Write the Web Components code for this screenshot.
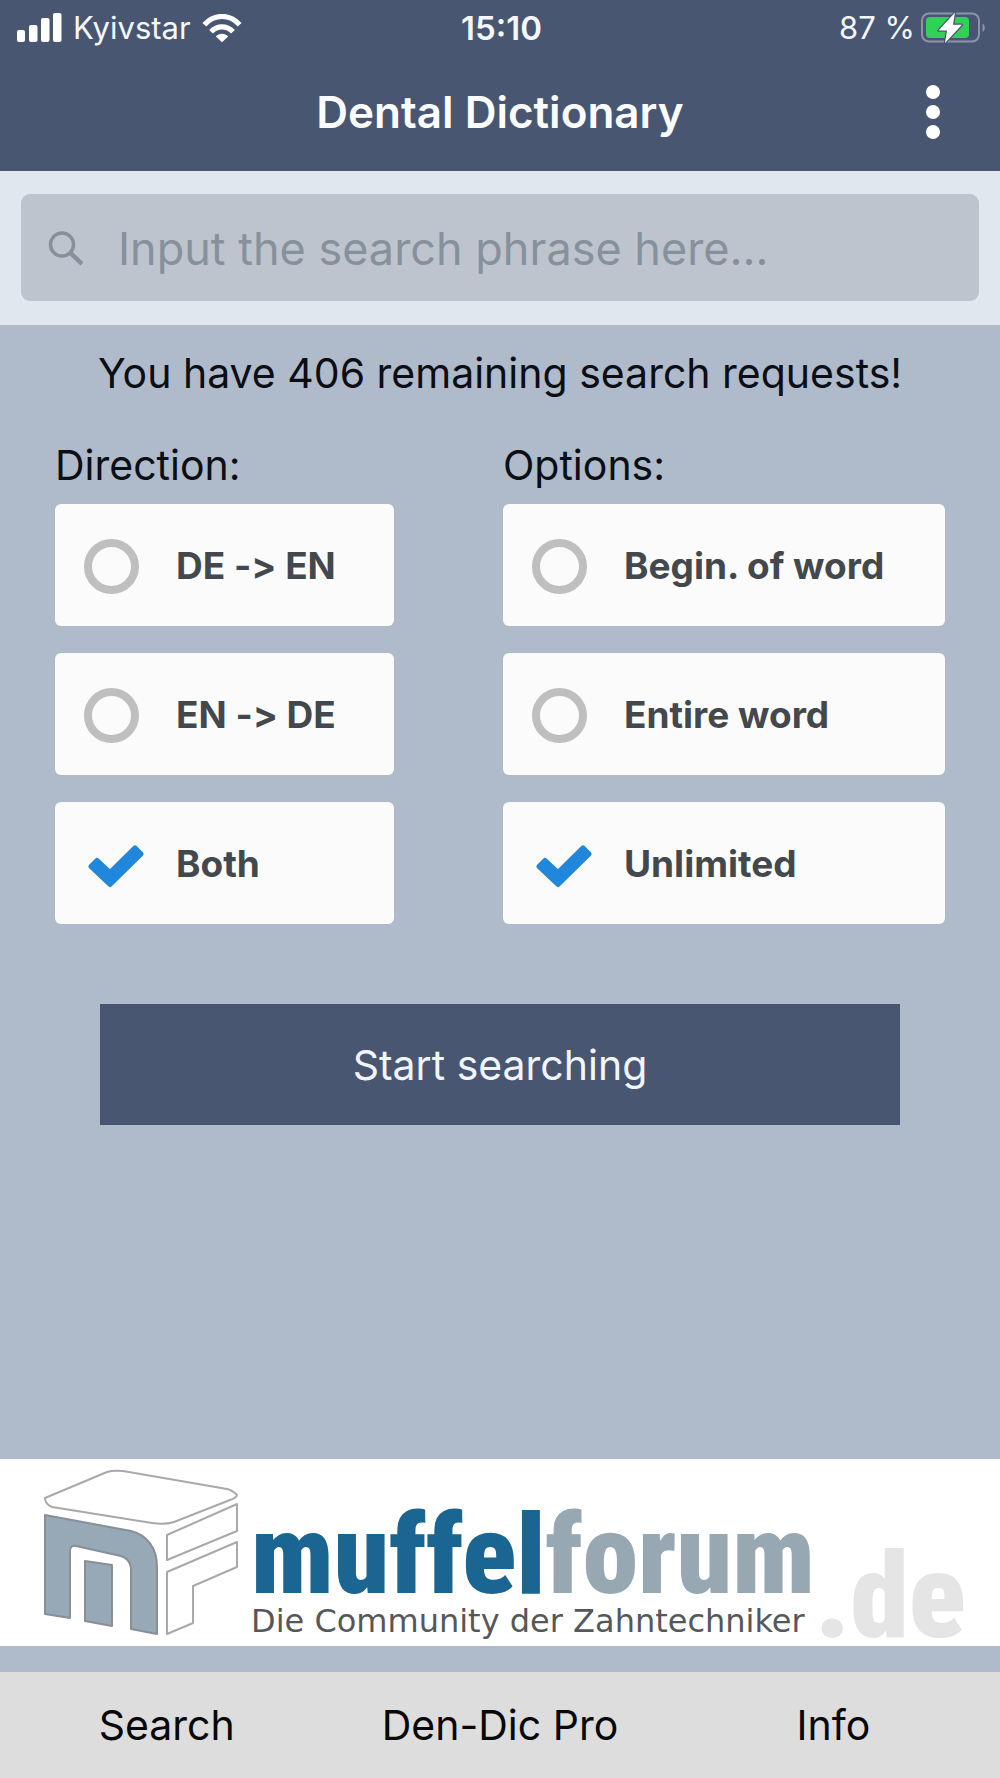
<!DOCTYPE html>
<html lang="en">
<head>
<meta charset="utf-8">
<meta name="viewport" content="width=device-width, initial-scale=1">
<title>Dental Dictionary</title>
<style>
  html { --navy: #495671; --haze: #afbacb; --ink: #0b0e14; }
  body { margin: 0; background: var(--haze); color: var(--ink); font-family: Inter, "Liberation Sans", sans-serif; }
</style>
</head>
<body>
<dental-app></dental-app>

<script>
const define = (name, html, setup) => {
  const template = document.createElement('template');
  template.innerHTML = html;
  customElements.define(name, class extends HTMLElement {
    connectedCallback() {
      if (this.shadowRoot) return;
      const root = this.attachShadow({ mode: 'open' });
      root.append(template.content.cloneNode(true));
      if (setup) setup(this, root);
    }
  });
};

define('status-bar', `
  <style>
    :host { display: grid; grid-template-columns: 1fr auto 1fr; align-items: center; height: 56px;
      box-sizing: border-box; padding: 0 14px 0 17px; font-size: 31px; line-height: 40px; color: #f4f7fd; }
    .left, .right { display: flex; align-items: center; }
    .left { gap: 11px; }
    .right { justify-content: flex-end; gap: 6px; }
    .time { font-size: 33px; font-weight: 600; }
    svg { display: block; flex: none; }
  </style>
  <div class="left">
    <svg width="45" height="30" viewBox="0 0 45 30" fill="#fff" aria-hidden="true">
      <rect x="0" y="17" width="8" height="12" rx="2"/><rect x="12" y="12" width="8.500" height="17" rx="2"/>
      <rect x="24" y="5" width="8.500" height="24" rx="2"/><rect x="36" y="0" width="8.500" height="29" rx="2"/>
    </svg>
    <span>Kyivstar</span>
    <svg width="40" height="29" viewBox="0 0 42 30" aria-hidden="true">
      <g fill="none" stroke="#fff" stroke-width="5.500">
        <path d="M2.500 11C13-.5 29-.5 39.500 11"/><path d="M9.500 18.500C16 11.500 26 11.500 32.500 18.500"/>
      </g>
      <path fill="#fff" d="M21 29.500L14.500 23.300C18 19.700 24 19.700 27.500 23.300Z"/>
    </svg>
  </div>
  <span class="time">15:10</span>
  <div class="right">
    <span>87 %</span>
    <svg width="65" height="32" viewBox="0 0 65 32" aria-hidden="true">
      <rect x="1" y="1.500" width="57" height="28" rx="7" fill="none" stroke="#8e93a8" stroke-width="2"/>
      <path d="M61.500 11.500C64.500 13 64.500 18.500 61.500 20Z" fill="#8e93a8"/>
      <rect x="5" y="5" width="43" height="21" rx="4" fill="#31d158"/>
      <path d="M34 .5L17.500 18.500H26L24 31L41 12.800H32Z" fill="#fff" stroke="#495671" stroke-width="2.500" stroke-linejoin="round" paint-order="stroke"/>
    </svg>
  </div>`);

define('app-header', `
  <style>
    :host { display: block; background: var(--navy); }
    .bar { display: grid; grid-template-columns: 54px 1fr 54px; align-items: center; height: 111px; padding: 0 40px 4px; }
    h1 { grid-column: 2; margin: 0; text-align: center; font-size: 44px; line-height: 50px; font-weight: 600; color: #fafcff; }
    button { height: 60px; padding: 0; border: 0; background: none; display: flex; align-items: center; justify-content: center; }
    svg { display: block; }
  </style>
  <status-bar></status-bar>
  <div class="bar">
    <h1><slot></slot></h1>
    <button type="button" aria-label="Menu">
      <svg width="14" height="54" viewBox="0 0 14 54" fill="#fff"><circle cx="7" cy="7" r="7"/><circle cx="7" cy="27" r="7"/><circle cx="7" cy="47" r="7"/></svg>
    </button>
  </div>`);

define('search-field', `
  <style>
    :host { display: block; background: #e1e7ee; padding: 23px 21px 24px; }
    label { display: flex; align-items: center; gap: 35px; height: 107px; box-sizing: border-box; padding: 2px 26px 0; border-radius: 9px; background: #bdc4ce; }
    svg { display: block; flex: none; }
    input { flex: 1; min-width: 0; height: 60px; padding: 0; border: 0; outline: 0; background: none; color: var(--ink); font: 45px/60px Inter, "Liberation Sans", sans-serif; }
    input::placeholder { color: #87919c; opacity: 1; }
  </style>
  <label>
    <svg width="36" height="36" viewBox="0 0 36 36" fill="none" stroke="#87909a" stroke-width="3.500" aria-hidden="true"><circle cx="15" cy="13.500" r="11.500"/><path d="M23 21.500L35 33" stroke-width="4.500"/></svg>
    <input type="search" aria-label="Search phrase" placeholder="Input the search phrase here...">
  </label>`);

/* All radios of a group live in one shadow root, so that they exclude each other. */
define('choice-group', `
  <style>
    :host { display: block; }
    fieldset { margin: 0; padding: 0; border: 0; min-width: 0; }
    legend { padding: 0; margin-bottom: 14px; font-size: 41px; line-height: 50px; }
    .list { display: flex; flex-direction: column; gap: 27px; }
    label { display: flex; align-items: center; gap: 37px; height: 122px; box-sizing: border-box; padding: 2px 29px 0;
      border-radius: 6px; background: #fbfbfb; color: #43484d; font-size: 37px; line-height: 44px; font-weight: 700;
      font-feature-settings: "calt" 0; white-space: nowrap; }
    .mark { display: grid; flex: none; width: 55px; height: 55px; }
    .mark > * { grid-area: 1 / 1; }
    input { appearance: none; width: 55px; height: 55px; margin: 0; box-sizing: border-box; border: 8px solid #bfbfbf; border-radius: 50%; }
    svg { display: none; overflow: visible; pointer-events: none; }
    input:checked { border-color: transparent; }
    input:checked + svg { display: block; }
  </style>
  <fieldset><legend></legend><div class="list"></div></fieldset>`,
  (host, root) => {
    const title = host.getAttribute('label');
    root.querySelector('legend').textContent = title;
    const list = root.querySelector('.list');
    host.getAttribute('options').split('|').forEach((text) => {
      const label = document.createElement('label');
      label.innerHTML = `<span class="mark"><input type="radio" name="choice">
        <svg width="55" height="55" viewBox="0 0 55 55" aria-hidden="true"><path d="M6.900 29.400L12.900 23.400L26 35.500L51.100 10.900L57.100 16.900L26 47.500Z" fill="#2087db" stroke="#2087db" stroke-width="5" stroke-linejoin="round"/></svg></span><span></span>`;
      label.lastElementChild.textContent = text;
      label.querySelector('input').checked = text === host.getAttribute('value');
      list.append(label);
    });
  });

define('search-form', `
  <style>
    :host { display: block; padding: 23px 0 0; }
    p { margin: 0 0 42px; text-align: center; font-size: 41px; line-height: 50px; }
    .groups { display: grid; grid-template-columns: 339fr 442fr; gap: 109px; padding: 0 55px; }
    button { display: block; width: 80%; height: 121px; margin: 80px auto 0; border: 0; background: var(--navy); color: #f1f5fd; font: 41px/50px Inter, "Liberation Sans", sans-serif; }
  </style>
  <p><slot></slot></p>
  <div class="groups">
    <choice-group label="Direction:" options="DE -&gt; EN|EN -&gt; DE|Both" value="Both"></choice-group>
    <choice-group label="Options:" options="Begin. of word|Entire word|Unlimited" value="Unlimited"></choice-group>
  </div>
  <button type="button">Start searching</button>`);

define('partner-banner', `
  <style>
    :host { display: block; background: #fff; }
    a { display: flex; height: 187px; padding-left: 42px; text-decoration: none; }
    svg { display: block; flex: none; margin-right: 11px; }
    .words { display: flex; flex-direction: column; justify-content: flex-end; padding-bottom: 5px; white-space: nowrap; }
    .name, .tld { font-family: "Roboto Condensed", Roboto, sans-serif; font-weight: 900; }
    .name { font-size: 112px; line-height: 92px; color: #1a6591; }
    .name b { font-weight: 900; color: #97a8b3; }
    .tag { font: 32px/40px "DejaVu Sans", sans-serif; color: #55585a; }
    .tld { align-self: flex-end; font-size: 118px; line-height: 98px; color: #e5e5e5; }
  </style>
  <a href="#muffelforum">
    <svg width="198" height="187" viewBox="12 4 198 187" fill="none" stroke="#a9a9a9" stroke-width="2" stroke-linejoin="round" aria-hidden="true">
      <path d="M15 43L77 17Q83 15 93 16L197 34Q202 35 207 40Q206 43 200 45L144 67Q135 70 122 68L22 52Q15 49 15 43Z"/>
      <path d="M15 60L101 76C117 80 127 93 127 112V179L101 174V113Q100 104 91 101L46 91Q40 90 40 96V163L15 159Z" fill="#97a8b7" stroke="#888f96"/>
      <path d="M55 106L82 110V171L55 166Z" fill="#97a8b7" stroke="#888f96"/>
      <path d="M137 80L207 49V76L137 105Z"/>
      <path d="M137 117L207 87V112L163 131V168L137 179Z"/>
    </svg>
    <span class="words"><span class="name">muffel<b>forum</b></span><span class="tag">Die Community der Zahntechniker</span></span>
    <span class="tld">.de</span>
  </a>`);

define('tab-bar', `
  <style>
    :host { display: block; background: #ddd; }
    nav { display: grid; grid-template-columns: repeat(3, 1fr); height: 106px; }
    a { display: flex; align-items: center; justify-content: center; color: #080808; text-decoration: none; font-size: 41px; line-height: 50px; }
  </style>
  <nav><a href="#search">Search</a><a href="#pro">Den-Dic Pro</a><a href="#info">Info</a></nav>`);

define('dental-app', `
  <style>
    :host { display: flex; flex-direction: column; min-height: 100vh; }
    partner-banner { margin: auto 0 26px; }
  </style>
  <app-header>Dental Dictionary</app-header>
  <search-field></search-field>
  <search-form>You have 406 remaining search requests!</search-form>
  <partner-banner></partner-banner>
  <tab-bar></tab-bar>`);
</script>
</body>
</html>
